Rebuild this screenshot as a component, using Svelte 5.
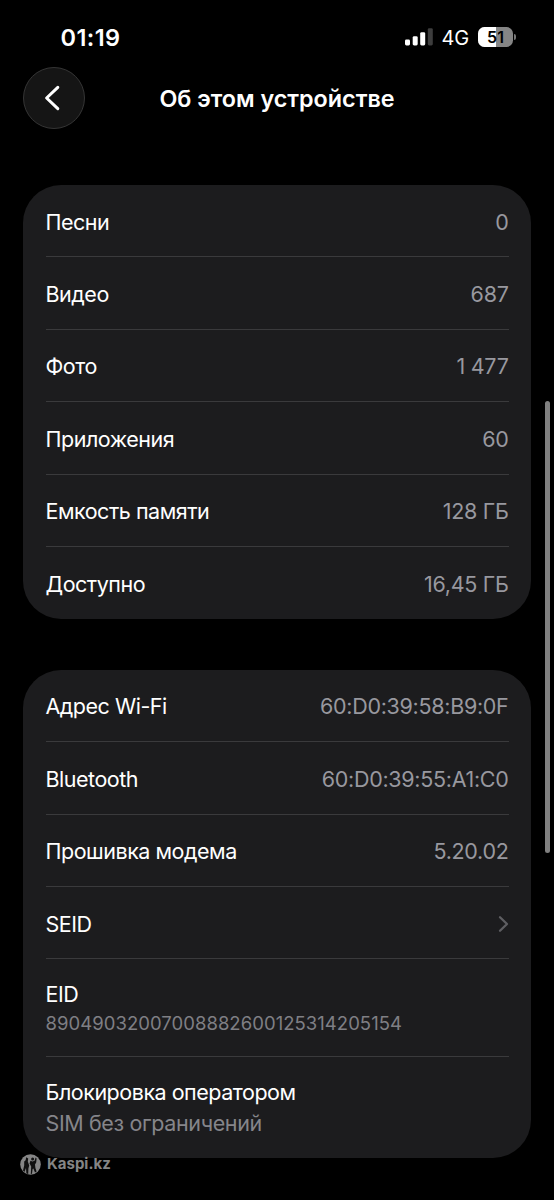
<script>
    const storage = [
        { label: 'Песни', value: '0' },
        { label: 'Видео', value: '687' },
        { label: 'Фото', value: '1 477' },
        { label: 'Приложения', value: '60' },
        { label: 'Емкость памяти', value: '128 ГБ' },
        { label: 'Доступно', value: '16,45 ГБ' }
    ];

    const network = [
        { label: 'Адрес Wi-Fi', value: '60:D0:39:58:B9:0F' },
        { label: 'Bluetooth', value: '60:D0:39:55:A1:C0' },
        { label: 'Прошивка модема', value: '5.20.02' },
        { label: 'SEID', link: true }
    ];

    const charge = 51;
</script>

<div class="screen">
    <header class="status">
        <span class="time">01:19</span>
        <div class="indicators">
            <svg class="signal" width="28" height="18" viewBox="0 0 28 18">
                <rect x="0" y="11.5" width="5" height="6" rx="1.4" fill="#fff" />
                <rect x="7.7" y="8.2" width="5" height="9.3" rx="1.4" fill="#fff" />
                <rect x="15.2" y="4.2" width="5" height="13.3" rx="1.4" fill="#fff" />
                <rect x="22.8" y="0.2" width="5" height="17.3" rx="1.4" fill="#3d3d3d" />
            </svg>
            <span class="carrier">4G</span>
            <div class="battery">
                <div class="charge" style="width: {charge}%"></div>
                <span class="percent">{charge}</span>
            </div>
            <div class="tip"></div>
        </div>
    </header>

    <nav class="bar">
        <button class="back" aria-label="Назад">
            <svg width="16" height="26" viewBox="0 0 16 26">
                <path d="M13.8 2.4 2.6 13l11.2 10.6" fill="none" stroke="#fff" stroke-width="3" stroke-linecap="round" stroke-linejoin="round" />
            </svg>
        </button>
        <h1>Об этом устройстве</h1>
    </nav>

    <section class="card">
        {#each storage as row}
            <div class="row">
                <span class="label">{row.label}</span>
                <span class="value">{row.value}</span>
            </div>
        {/each}
    </section>

    <section class="card">
        {#each network as row}
            <div class="row">
                <span class="label">{row.label}</span>
                {#if row.link}
                    <svg width="11" height="18" viewBox="0 0 11 18">
                        <path d="M2 2.2 9 9 2 15.8" fill="none" stroke="#5e5e62" stroke-width="2.3" stroke-linecap="round" stroke-linejoin="round" />
                    </svg>
                {:else}
                    <span class="value">{row.value}</span>
                {/if}
            </div>
        {/each}
        <div class="row stacked">
            <span class="label">EID</span>
            <span class="eid">89049032007008882600125314205154</span>
        </div>
        <div class="row stacked lock">
            <span class="label">Блокировка оператором</span>
            <span class="note">SIM без ограничений</span>
        </div>
    </section>

    <div class="scrollbar"></div>

    <div class="watermark">
        <svg width="21" height="21" viewBox="0 0 21 21">
            <circle cx="10.5" cy="10.5" r="10.3" fill="#858585" />
            <path d="M6.2 3.2 8.2 4.6 7.8 7.4 9.2 11.4 8.4 14.6 8.2 20 6.4 19.4 6 14 4.4 18 3 16.6 4.2 11.6 4.2 7.6 5.6 6.2z" fill="#101010" />
            <path d="M10.4 6.8 12.4 7.6 14.6 6.8 15.6 3.6 16.6 4.4 16.2 8.4 15 10.4 15.4 14 16.6 17.4 15 18.6 13.4 14.6 12.6 15 12 19.8 10.8 20 11.2 12.4 9.6 9.6z" fill="#101010" />
            <circle cx="12.6" cy="5" r="1.5" fill="#101010" />
        </svg>
        <span>Kaspi.kz</span>
    </div>
</div>

<style>
    :global(body) {
        margin: 0;
        background: #000;
    }

    .screen {
        position: relative;
        box-sizing: border-box;
        width: 554px;
        height: 1200px;
        padding: 0 23px;
        overflow: hidden;
        background: #000;
        color: #fff;
        font-family: Inter, "Liberation Sans", sans-serif;
    }

    .status {
        display: flex;
        justify-content: space-between;
        align-items: center;
        height: 67px;
        padding: 7px 15px 0 37.5px;
        box-sizing: border-box;
    }

    .time {
        font-size: 23.5px;
        font-weight: 600;
        letter-spacing: 0.4px;
    }

    .indicators {
        display: flex;
        align-items: center;
    }

    .carrier {
        margin: 2px 9px 0 9px;
        font-size: 20px;
        letter-spacing: -0.2px;
    }

    .battery {
        position: relative;
        width: 35px;
        height: 20px;
        border-radius: 6.5px;
        overflow: hidden;
        background: #858585;
    }

    .charge {
        height: 100%;
        background: #fff;
    }

    .percent {
        position: absolute;
        inset: 0;
        color: #000;
        font-size: 16px;
        font-weight: 600;
        line-height: 20px;
        text-align: center;
    }

    .tip {
        width: 2px;
        height: 6px;
        margin-left: 1px;
        border-radius: 0 2px 2px 0;
        background: #777;
    }

    .bar {
        display: grid;
        grid-template-columns: 62px 1fr 62px;
        align-items: center;
        height: 62px;
        margin-bottom: 56px;
    }

    .back {
        display: flex;
        align-items: center;
        justify-content: center;
        width: 62px;
        height: 62px;
        padding: 0 4px 0 0;
        border: 1px solid #353535;
        border-radius: 50%;
        background: #151515;
    }

    h1 {
        margin: 0;
        padding-top: 2px;
        font-size: 23.3px;
        font-weight: 600;
        line-height: 28px;
        text-align: center;
        white-space: nowrap;
    }

    .card {
        margin-bottom: 50.4px;
        padding: 0 22.5px;
        border-radius: 38px;
        background: #1c1c1e;
    }

    .row {
        display: flex;
        align-items: center;
        justify-content: space-between;
        box-sizing: border-box;
        height: 72.4px;
        padding-top: 2px;
        border-bottom: 1px solid #3a3a3c;
        font-size: 21.5px;
        line-height: 28px;
        white-space: nowrap;
    }

    .row:last-child {
        border-bottom-color: transparent;
    }

    .label {
        letter-spacing: -0.48px;
    }

    .value {
        color: #98989f;
        letter-spacing: -0.3px;
    }

    .stacked {
        flex-direction: column;
        align-items: flex-start;
        justify-content: flex-start;
        height: 97.6px;
        padding-top: 21px;
    }

    .eid {
        color: #7f7f84;
        font-size: 18.5px;
        line-height: 30px;
        letter-spacing: 0.04px;
    }

    .lock {
        height: 101px;
    }

    .note {
        color: #85858a;
        line-height: 34px;
        letter-spacing: -0.38px;
    }

    .scrollbar {
        position: absolute;
        top: 401px;
        right: 4px;
        width: 5px;
        height: 452px;
        border-radius: 3px;
        background: #808080;
    }

    .watermark {
        position: absolute;
        left: 20px;
        top: 1153.5px;
        display: flex;
        align-items: center;
        gap: 6px;
        color: #858585;
        font-size: 15px;
        font-weight: 700;
    }

    .watermark span {
        margin-top: -1px;
    }
</style>
